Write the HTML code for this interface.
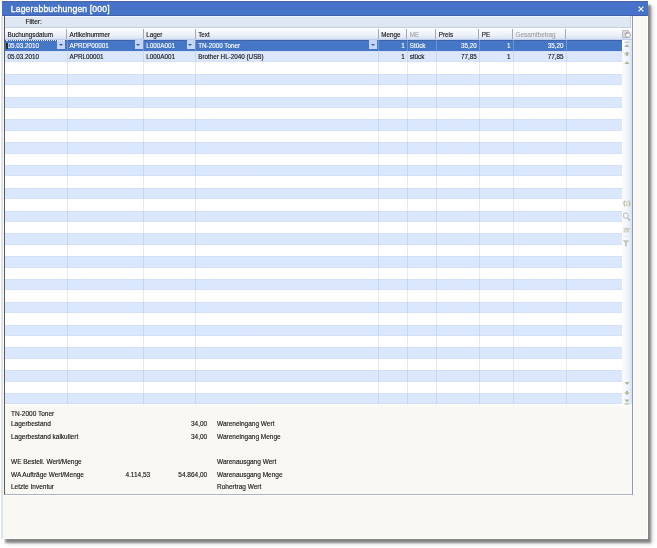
<!DOCTYPE html>
<html><head><meta charset="utf-8">
<style>
html,body{margin:0;padding:0;background:#fff;width:657px;height:548px;overflow:hidden;}
body{position:relative;font-family:"Liberation Sans",sans-serif;color:#1a1a1a;}
#root{position:absolute;left:0;top:0;width:657px;height:548px;will-change:transform;}
.a{position:absolute;}
.win{left:2px;top:1px;width:646px;height:538px;background:#f9f8f3;box-shadow:3px 4px 2px rgba(0,0,0,0.4), 5px 5px 4px rgba(0,0,0,0.14);}
.wb{left:1px;top:16px;width:1.5px;height:523px;background:#dfe3ea;}
.wr{left:647px;top:16px;width:1px;height:523px;background:#ffffff;}
.wbt{left:2px;top:538px;width:646px;height:1px;background:#ffffff;}
.title{left:2px;top:1px;width:646px;height:15px;background:linear-gradient(#4a65a2 0,#4a65a2 1px,#4673c8 1px,#4673c8 14px,#4160aa 14px);}
.ttext{left:10.8px;top:4.4px;font-size:8.6px;color:#fff;-webkit-text-stroke:0.3px #fff;white-space:nowrap;line-height:10px;letter-spacing:0.15px;}
.panel{left:4px;top:16px;width:627px;height:478px;border-left:1px solid #5a5a5a;border-right:1px solid #8e9ab2;border-bottom:1px solid #a9b4cc;background:#f9f8f3;}
.wl{left:633px;top:16px;width:1px;height:480px;background:#fff;}
.filter{left:5px;top:16px;width:625px;height:10.7px;background:linear-gradient(#f2f5fb 0,#f2f5fb 1px,#dfe6f4 1px);border-right:1px solid #c9d3e6;border-bottom:1px solid #c6d0e3;}
.ftext{left:25.5px;top:17.8px;font-size:6.5px;line-height:8px;color:#111;-webkit-text-stroke:0.12px #111;}
.hdr{top:27.7px;height:12px;background:linear-gradient(#ffffff 0%,#f6f8fc 30%,#dfe7f6 85%,#b4c6e6 100%);}
.grid{left:5px;top:39.6px;width:617px;height:364.8px;background:#fff;}
.nav{left:622px;top:39.6px;width:10px;height:365.5px;background:linear-gradient(90deg,#fbfcfe,#eef3fb 60%,#d6e0f2);}
.stripe{height:11.4px;background:linear-gradient(#cddcf6,#dae7fc 12%,#dae7fc 88%,#d2e0f8);}
.sel{height:11px;background:linear-gradient(#3f63aa 0,#3f63aa 1px,#4676c6 1.5px);}
.vl{width:1px;background:rgba(155,172,210,0.26);}
.t{font-size:6.3px;line-height:8px;white-space:nowrap;color:#111;-webkit-text-stroke:0.12px #111;}
.w{color:#fff;-webkit-text-stroke:0.12px #fff;}
.dis{color:#a0a0a0;-webkit-text-stroke:0.1px #a0a0a0;}
.hb{color:#111;-webkit-text-stroke:0.12px #111;}
.dd{width:8px;height:8.9px;background:#c4d6f6;}
.dd:after{content:"";position:absolute;left:1.8px;top:3.2px;border-left:2.2px solid transparent;border-right:2.2px solid transparent;border-top:2.4px solid #3a5896;}
.info{font-size:6.5px;line-height:8px;white-space:nowrap;color:#111;-webkit-text-stroke:0.12px #111;}
</style></head><body><div id="root">
<div class="a win"></div>
<div class="a wb"></div>
<div class="a wr"></div>
<div class="a wbt"></div>
<div class="a title"></div>
<div class="a ttext">Lagerabbuchungen [000]</div>
<svg class="a" style="left:637.5px;top:5.5px" width="6" height="6" viewBox="0 0 6 6"><path d="M0.6 0.6L5.4 5.4M5.4 0.6L0.6 5.4" stroke="#fff" stroke-width="1.1"/></svg>
<div class="a panel"></div>
<div class="a wl"></div>
<div class="a" style="left:4px;top:495px;width:629px;height:1px;background:#fff"></div>
<div class="a filter"></div>
<div class="a ftext">Filter:</div>

<div class="a grid"></div>
<div class="a nav"></div>
<div class="a" style="left:5px;top:404.4px;width:627px;height:1.2px;background:#fdfdfb"></div>
<div class="a stripe" style="left:5px;top:51.00px;width:617px"></div>
<div class="a stripe" style="left:5px;top:73.80px;width:617px"></div>
<div class="a stripe" style="left:5px;top:96.60px;width:617px"></div>
<div class="a stripe" style="left:5px;top:119.40px;width:617px"></div>
<div class="a stripe" style="left:5px;top:142.20px;width:617px"></div>
<div class="a stripe" style="left:5px;top:165.00px;width:617px"></div>
<div class="a stripe" style="left:5px;top:187.80px;width:617px"></div>
<div class="a stripe" style="left:5px;top:210.60px;width:617px"></div>
<div class="a stripe" style="left:5px;top:233.40px;width:617px"></div>
<div class="a stripe" style="left:5px;top:256.20px;width:617px"></div>
<div class="a stripe" style="left:5px;top:279.00px;width:617px"></div>
<div class="a stripe" style="left:5px;top:301.80px;width:617px"></div>
<div class="a stripe" style="left:5px;top:324.60px;width:617px"></div>
<div class="a stripe" style="left:5px;top:347.40px;width:617px"></div>
<div class="a stripe" style="left:5px;top:370.20px;width:617px"></div>
<div class="a stripe" style="left:5px;top:393.00px;width:617px"></div>
<div class="a sel" style="left:5px;top:39.60px;width:617px"></div>
<div class="a vl" style="left:66.5px;top:39.6px;height:364.8px"></div>
<div class="a vl" style="left:143.2px;top:39.6px;height:364.8px"></div>
<div class="a vl" style="left:195.2px;top:39.6px;height:364.8px"></div>
<div class="a vl" style="left:378.2px;top:39.6px;height:364.8px"></div>
<div class="a vl" style="left:406.7px;top:39.6px;height:364.8px"></div>
<div class="a vl" style="left:435.8px;top:39.6px;height:364.8px"></div>
<div class="a vl" style="left:478.8px;top:39.6px;height:364.8px"></div>
<div class="a vl" style="left:512.6px;top:39.6px;height:364.8px"></div>
<div class="a vl" style="left:565.5px;top:39.6px;height:364.8px"></div>
<div class="a vl" style="left:66.5px;top:39.6px;height:11px;background:#6f92d8"></div>
<div class="a vl" style="left:143.2px;top:39.6px;height:11px;background:#6f92d8"></div>
<div class="a vl" style="left:195.2px;top:39.6px;height:11px;background:#6f92d8"></div>
<div class="a vl" style="left:378.2px;top:39.6px;height:11px;background:#6f92d8"></div>
<div class="a vl" style="left:406.7px;top:39.6px;height:11px;background:#6f92d8"></div>
<div class="a vl" style="left:435.8px;top:39.6px;height:11px;background:#6f92d8"></div>
<div class="a vl" style="left:478.8px;top:39.6px;height:11px;background:#6f92d8"></div>
<div class="a vl" style="left:512.6px;top:39.6px;height:11px;background:#6f92d8"></div>
<div class="a vl" style="left:565.5px;top:39.6px;height:11px;background:#6f92d8"></div>
<div class="a hdr" style="left:5px;width:62.0px"></div>
<div class="a vl" style="left:66.0px;top:29px;height:10px;background:#a3abbb"></div>
<div class="a vl" style="left:67.0px;top:29px;height:10px;background:#ffffff"></div>
<div class="a hdr" style="left:67px;width:76.7px"></div>
<div class="a vl" style="left:142.7px;top:29px;height:10px;background:#a3abbb"></div>
<div class="a vl" style="left:143.7px;top:29px;height:10px;background:#ffffff"></div>
<div class="a hdr" style="left:143.7px;width:52.0px"></div>
<div class="a vl" style="left:194.7px;top:29px;height:10px;background:#a3abbb"></div>
<div class="a vl" style="left:195.7px;top:29px;height:10px;background:#ffffff"></div>
<div class="a hdr" style="left:195.7px;width:183.0px"></div>
<div class="a vl" style="left:377.7px;top:29px;height:10px;background:#a3abbb"></div>
<div class="a vl" style="left:378.7px;top:29px;height:10px;background:#ffffff"></div>
<div class="a hdr" style="left:378.7px;width:28.5px"></div>
<div class="a vl" style="left:406.2px;top:29px;height:10px;background:#a3abbb"></div>
<div class="a vl" style="left:407.2px;top:29px;height:10px;background:#ffffff"></div>
<div class="a hdr" style="left:407.2px;width:29.1px"></div>
<div class="a vl" style="left:435.3px;top:29px;height:10px;background:#a3abbb"></div>
<div class="a vl" style="left:436.3px;top:29px;height:10px;background:#ffffff"></div>
<div class="a hdr" style="left:436.3px;width:43.0px"></div>
<div class="a vl" style="left:478.3px;top:29px;height:10px;background:#a3abbb"></div>
<div class="a vl" style="left:479.3px;top:29px;height:10px;background:#ffffff"></div>
<div class="a hdr" style="left:479.3px;width:33.8px"></div>
<div class="a vl" style="left:512.1px;top:29px;height:10px;background:#a3abbb"></div>
<div class="a vl" style="left:513.1px;top:29px;height:10px;background:#ffffff"></div>
<div class="a hdr" style="left:513.1px;width:52.9px"></div>
<div class="a vl" style="left:565.0px;top:29px;height:10px;background:#a3abbb"></div>
<div class="a vl" style="left:566.0px;top:29px;height:10px;background:#ffffff"></div>
<div class="a hdr" style="left:566px;width:56.0px"></div>
<div class="a hdr" style="left:622px;width:10px"></div>
<div class="a t " style="left:7.5px;top:30.7px">Buchungsdatum</div>
<div class="a t " style="left:69.5px;top:30.7px">Artikelnummer</div>
<div class="a t " style="left:146.2px;top:30.7px">Lager</div>
<div class="a t " style="left:198.2px;top:30.7px">Text</div>
<div class="a t " style="left:381.2px;top:30.7px">Menge</div>
<div class="a t dis" style="left:409.7px;top:30.7px">ME</div>
<div class="a t hb" style="left:438.8px;top:30.7px">Preis</div>
<div class="a t hb" style="left:481.8px;top:30.7px">PE</div>
<div class="a t dis" style="left:515.6px;top:30.7px">Gesamtbetrag</div>
<div class="a t w" style="left:7.5px;top:42.0px">05.03.2010</div>
<div class="a t w" style="left:69.5px;top:42.0px">APRDP00001</div>
<div class="a t w" style="left:146.2px;top:42.0px">L000A001</div>
<div class="a t w" style="left:198.2px;top:42.0px">TN-2000 Toner</div>
<div class="a t w" style="right:252.3px;top:42.0px">1</div>
<div class="a t w" style="left:409.7px;top:42.0px">Stück</div>
<div class="a t w" style="right:180.2px;top:42.0px">35,20</div>
<div class="a t w" style="right:146.4px;top:42.0px">1</div>
<div class="a t w" style="right:93.5px;top:42.0px">35,20</div>
<div class="a t " style="left:7.5px;top:53.4px">05.03.2010</div>
<div class="a t " style="left:69.5px;top:53.4px">APRL00001</div>
<div class="a t " style="left:146.2px;top:53.4px">L000A001</div>
<div class="a t " style="left:198.2px;top:53.4px">Brother HL-2040 (USB)</div>
<div class="a t " style="right:252.3px;top:53.4px">1</div>
<div class="a t " style="left:409.7px;top:53.4px">stück</div>
<div class="a t " style="right:180.2px;top:53.4px">77,85</div>
<div class="a t " style="right:146.4px;top:53.4px">1</div>
<div class="a t " style="right:93.5px;top:53.4px">77,85</div>
<div class="a dd" style="left:57.3px;top:40.4px"></div>
<div class="a dd" style="left:134.6px;top:40.4px"></div>
<div class="a dd" style="left:186.6px;top:40.4px"></div>
<div class="a dd" style="left:369.2px;top:40.4px"></div>
<div class="a" style="left:6px;top:40.2px;width:58px;height:0;border-top:1px dotted #e8eeff"></div>
<div class="a" style="left:6.3px;top:42.5px;width:2px;height:6px;background:#2a2a2a"></div>
<svg class="a" style="left:618px;top:26px" width="16" height="16" viewBox="618 26 16 16"><rect x="622.7" y="30.7" width="5.6" height="6.8" fill="#e4e6ea" stroke="#ababab" stroke-width="0.8"/><path d="M623.6 31.6h1.2v5h-1.2z" fill="#d0d0dc"/><rect x="625.6" y="32.4" width="4.6" height="4.8" rx="1.6" fill="#ffffff" stroke="#9a9a9a" stroke-width="0.9"/><path d="M626.2 33.6h2.2" stroke="#888" stroke-width="0.8"/></svg>
<svg class="a" style="left:618px;top:26px" width="16" height="384" viewBox="618 26 16 384"><rect x="624.6" y="41.7" width="4.6" height="1" fill="#b0b99e"/><path d="M624.1 47.1L626.9 44.0L629.7 47.1Z" fill="#b0b99e"/><path d="M623.9 54.3L626.9 51.6L629.9 54.3H627.9V56H625.9V54.3Z" fill="#b0b99e"/><path d="M624.3 64.1L626.9 61.0L629.5 64.1Z" fill="#b0b99e"/><path d="M624.6 382.1L627.0 385.0L629.5 382.1Z" fill="#b0b99e"/><path d="M626.0 390.8H628.0V392.4H630.0L627.0 395.0L624.0 392.4H626.0Z" fill="#b0b99e"/><path d="M624.4 399.6L627.0 402.6L629.6 399.6Z" fill="#b0b99e"/><rect x="624.6" y="403.4" width="4.6" height="1.1" fill="#b0b99e"/><path d="M625.2 200.8C623.6 202 623.6 205 625.2 206.2M628.6 200.8C630.2 202 630.2 205 628.6 206.2" fill="none" stroke="#b5bea3" stroke-width="1.3"/><path d="M626.9 200.8v5.4" stroke="#bcc5ab" stroke-width="1"/><rect x="623.6" y="213.1" width="4.4" height="5" rx="1.2" fill="#f4f6f8" stroke="#b4b4b4" stroke-width="0.9"/><path d="M627.6 218.2L630 220.6" stroke="#a8a8a8" stroke-width="1.1"/><path d="M623.4 228.3h6M623.4 231.8h6" stroke="#c0c8b2" stroke-width="0.9"/><path d="M624 231.2L626 229L628 230.6L629.4 228.4" fill="none" stroke="#b4bda2" stroke-width="1"/><path d="M623.6 236.2h5" stroke="#dfe3dc" stroke-width="0.6"/><path d="M622.8 240.2h6.4l-2.3 2.7v3.6h-1.8v-3.6z" fill="#bfc8b0"/></svg>
<div class="a info" style="left:11px;top:409.7px">TN-2000 Toner</div>
<div class="a info" style="left:11px;top:420.2px">Lagerbestand</div>
<div class="a info" style="left:11px;top:432.9px">Lagerbestand kalkuliert</div>
<div class="a info" style="left:11px;top:458.4px">WE Bestell. Wert/Menge</div>
<div class="a info" style="left:11px;top:470.8px">WA Aufträge Wert/Menge</div>
<div class="a info" style="left:11px;top:483.0px">Letzte Inventur</div>
<div class="a info" style="left:217px;top:420.0px">Wareneingang Wert</div>
<div class="a info" style="left:217px;top:433.1px">Wareneingang Menge</div>
<div class="a info" style="left:217px;top:457.5px">Warenausgang Wert</div>
<div class="a info" style="left:217px;top:470.6px">Warenausgang Menge</div>
<div class="a info" style="left:217px;top:482.7px">Rohertrag Wert</div>
<div class="a info" style="right:449.8px;top:420.0px">34,00</div>
<div class="a info" style="right:449.8px;top:433.1px">34,00</div>
<div class="a info" style="right:449.8px;top:470.6px">54.864,00</div>
<div class="a info" style="right:506.8px;top:470.6px">4.114,53</div>
</div></body></html>
